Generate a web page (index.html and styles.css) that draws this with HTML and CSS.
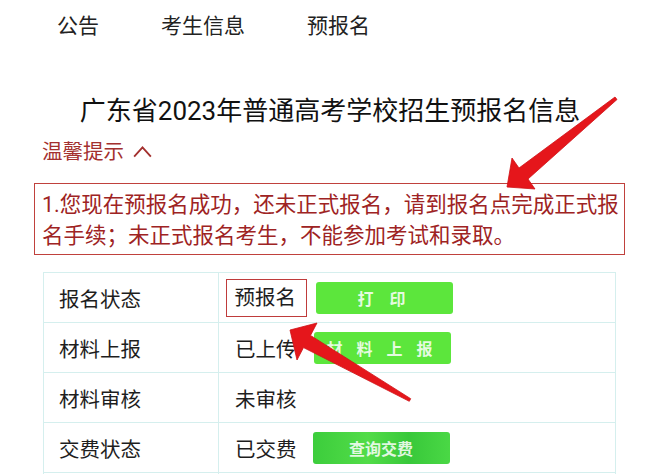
FILE: index.html
```html
<!DOCTYPE html>
<html lang="zh-CN">
<head>
<meta charset="utf-8">
<title>预报名信息</title>
<link rel="stylesheet" href="styles.css">
</head>
<body>
<div class="page">
  <nav class="nav">
    <span class="nav-item">公告</span>
    <span class="nav-item">考生信息</span>
    <span class="nav-item">预报名</span>
  </nav>

  <h1 class="title">广东省2023年普通高考学校招生预报名信息</h1>

  <div class="tip-head">温馨提示 <svg class="chev" viewBox="0 0 22 14" width="21" height="13"><path d="M2 12.5 L11 2.5 L20 12.5" fill="none" stroke="currentColor" stroke-width="2"/></svg></div>

  <div class="tip-box">1.您现在预报名成功，还未正式报名，请到报名点完成正式报<br>名手续；未正式报名考生，不能参加考试和录取。</div>

  <div class="table">
    <div class="row">
      <div class="label">报名状态</div>
      <div class="value"><span class="mark">预报名</span><span class="btn btn-print">打 印</span></div>
    </div>
    <div class="row">
      <div class="label">材料上报</div>
      <div class="value"><span class="text">已上传</span><span class="btn btn-upload">材 料 上 报</span></div>
    </div>
    <div class="row">
      <div class="label">材料审核</div>
      <div class="value"><span class="text">未审核</span></div>
    </div>
    <div class="row">
      <div class="label">交费状态</div>
      <div class="value"><span class="text">已交费</span><span class="btn btn-fee">查询交费</span></div>
    </div>
    <div class="row">
      <div class="label"></div>
      <div class="value"></div>
    </div>
  </div>

  <svg class="arrows" viewBox="0 0 663 474" width="663" height="474">
    <polygon class="arrow" points="507,187 512,158 519,168 615,97 617,99.5 528,179 535,189"/>
    <polygon class="arrow" points="290,330 317,323 310.5,335.4 410.7,398.7 409.3,401.3 303.5,347.6 297,360"/>
  </svg>
</div>
</body>
</html>
```

FILE: styles.css
```css
html, body {
  margin: 0;
  padding: 0;
  background: #ffffff;
}

body {
  font-family: "Roboto", "Noto Sans CJK SC", "Noto Sans", sans-serif;
  color: #1c1c1c;
}

.page {
  position: relative;
  width: 663px;
  height: 474px;
  overflow: hidden;
}

.nav {
  display: flex;
  gap: 62px;
  padding: 11px 0 0 57px;
  height: 30px;
}

.nav-item {
  font-size: 21px;
  line-height: 30px;
  color: #222222;
}

.title {
  margin: 53px 0 0 0;
  font-family: "Roboto", "Noto Sans CJK SC", sans-serif;
  font-size: 26px;
  line-height: 34px;
  font-weight: 400;
  text-align: center;
  color: #111111;
  padding-right: 3px;
}

.tip-head {
  margin: 10px 0 0 42px;
  font-size: 20.5px;
  line-height: 28px;
  color: #a3302e;
  display: flex;
  align-items: center;
  gap: 8px;
}

.chev {
  display: block;
  margin-top: -2px;
}

.tip-box {
  margin: 17px 0 0 34px;
  width: 575px;
  border: 1.5px solid #c0413d;
  padding: 5px 7px 3px 7px;
  font-size: 21.5px;
  line-height: 31px;
  color: #9e2323;
  white-space: nowrap;
}

.table {
  margin: 17px 0 0 43px;
  width: 571px;
  border: 1px solid #d5efee;
}

.row {
  display: grid;
  grid-template-columns: 175px 1fr;
  height: 49px;
  border-top: 1px solid #d5efee;
}

.row:first-child {
  border-top: none;
}

.label {
  border-right: 1px solid #d5efee;
  display: flex;
  align-items: center;
  padding-left: 15px;
  font-size: 20.5px;
  color: #1e1e1e;
}

.value {
  display: flex;
  align-items: center;
  padding-left: 16px;
  font-size: 20.5px;
  color: #1e1e1e;
}

.mark {
  margin-left: -9px;
  border: 1.5px solid #bf3b3b;
  padding: 6px 10px 6px 7.5px;
  line-height: 24px;
}

.btn {
  display: flex;
  align-items: center;
  justify-content: center;
  width: 137px;
  height: 32px;
  border-radius: 3px;
  font-size: 16px;
  font-weight: 700;
  color: rgba(255, 255, 255, 0.85);
  background: #5ce63c;
}

.btn-print {
  margin-left: 9px;
  letter-spacing: 6px;
}

.btn-upload {
  margin-left: 17px;
  letter-spacing: 5px;
}

.btn-fee {
  margin-left: 16px;
  background: linear-gradient(90deg, #3ccd3c 0%, #52dc48 40%, #38c83a 70%, #4ad845 100%);
  letter-spacing: 0;
}

.arrows {
  position: absolute;
  left: 0;
  top: 0;
  pointer-events: none;
}

.arrow {
  fill: #e5161b;
  stroke: #cf1015;
  stroke-width: 0.8;
  stroke-linejoin: round;
}
```
